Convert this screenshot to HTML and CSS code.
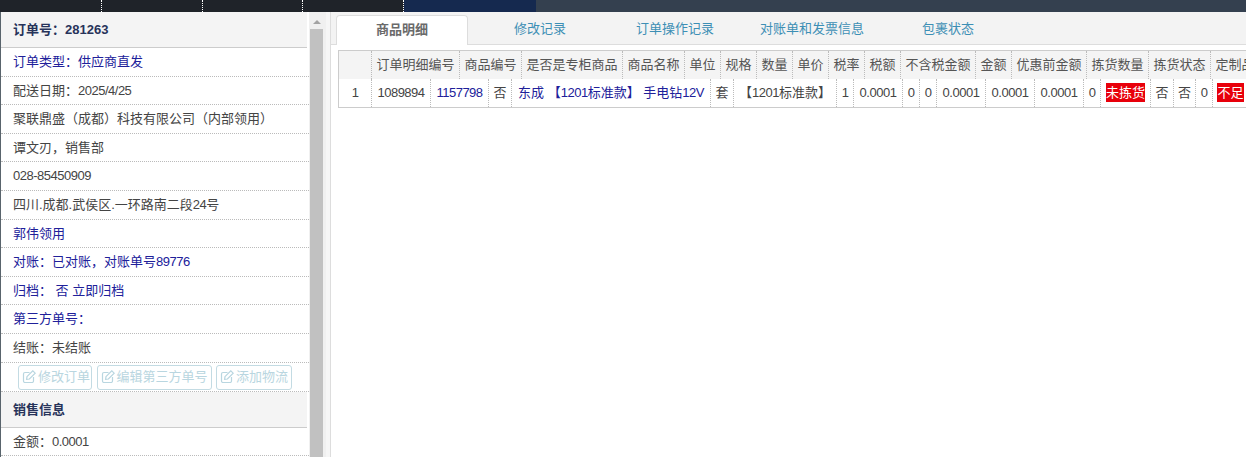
FILE: index.html
```html
<!DOCTYPE html>
<html lang="zh">
<head>
<meta charset="utf-8">
<title>订单详情</title>
<link rel="stylesheet" href="styles.css">
</head>
<body>
<div class="topbar">
  <div class="tb dark"></div><div class="tb dark"></div><div class="tb dark"></div><div class="tb dark"></div>
  <div class="tb navy"></div><div class="tb slate"></div>
</div>
<div class="main">
  <aside class="side">
    <div class="panel">
      <div class="ph">订单号：281263</div>
      <div class="row blue">订单类型：供应商直发</div>
      <div class="row">配送日期：<span class="d">2025/4/25</span></div>
      <div class="row">聚联鼎盛（成都）科技有限公司（内部领用）</div>
      <div class="row">谭文刃，销售部</div>
      <div class="row"><span class="d">028-85450909</span></div>
      <div class="row">四川.成都.武侯区.一环路南二段<span class="d">24</span>号</div>
      <div class="row blue">郭伟领用</div>
      <div class="row blue">对账：已对账，对账单号<span class="d">89776</span></div>
      <div class="row blue">归档： 否 立即归档</div>
      <div class="row blue">第三方单号：</div>
      <div class="row">结账：未结账</div>
      <div class="btns">
        <span class="btn"><svg class="ic" viewBox="0 0 14 14"><path d="M7.5 2.5H3A1.5 1.5 0 0 0 1.5 4v7A1.5 1.5 0 0 0 3 12.5h7a1.5 1.5 0 0 0 1.5-1.5V7" fill="none" stroke="currentColor" stroke-width="1.2"/><path d="M5 6.6 10.8 .8l2.4 2.4L7.4 9 4.6 9.4z" fill="none" stroke="currentColor" stroke-width="1.2"/></svg>修改订单</span>
        <span class="btn wide"><svg class="ic" viewBox="0 0 14 14"><path d="M7.5 2.5H3A1.5 1.5 0 0 0 1.5 4v7A1.5 1.5 0 0 0 3 12.5h7a1.5 1.5 0 0 0 1.5-1.5V7" fill="none" stroke="currentColor" stroke-width="1.2"/><path d="M5 6.6 10.8 .8l2.4 2.4L7.4 9 4.6 9.4z" fill="none" stroke="currentColor" stroke-width="1.2"/></svg>编辑第三方单号</span>
        <span class="btn wide"><svg class="ic" viewBox="0 0 14 14"><path d="M7.5 2.5H3A1.5 1.5 0 0 0 1.5 4v7A1.5 1.5 0 0 0 3 12.5h7a1.5 1.5 0 0 0 1.5-1.5V7" fill="none" stroke="currentColor" stroke-width="1.2"/><path d="M5 6.6 10.8 .8l2.4 2.4L7.4 9 4.6 9.4z" fill="none" stroke="currentColor" stroke-width="1.2"/></svg>添加物流</span>
      </div>
      <div class="ph">销售信息</div>
      <div class="row">金额：<span class="d">0.0001</span></div>
    </div>
    <div class="sb"><div class="arrow"></div><div class="thumb"></div></div>
  </aside>
  <section class="content">
    <nav class="tabs">
      <span class="tab on">商品明细</span>
      <span class="tab t2">修改记录</span>
      <span class="tab t3">订单操作记录</span>
      <span class="tab t4">对账单和发票信息</span>
      <span class="tab t5">包裹状态</span>
    </nav>
    <div class="grid">
      <div class="gh">
        <span class="c w33"></span><span class="c w88">订单明细编号</span><span class="c w62">商品编号</span><span class="c w101">是否是专柜商品</span><span class="c w62">商品名称</span><span class="c w36">单位</span><span class="c w36">规格</span><span class="c w36">数量</span><span class="c w36">单价</span><span class="c w36">税率</span><span class="c w36">税额</span><span class="c w75">不含税金额</span><span class="c w36">金额</span><span class="c w75">优惠前金额</span><span class="c w62">拣货数量</span><span class="c w62">拣货状态</span><span class="c w49">定制品</span>
      </div>
      <div class="gb">
        <span class="c w33 d">1</span><span class="c w59 d">1089894</span><span class="c w58 d blue">1157798</span><span class="c w23">否</span><span class="c w199 blue">东成 【<span class="d">1201</span>标准款】 手电钻<span class="d">12V</span></span><span class="c w23">套</span><span class="c w103">【<span class="d">1201</span>标准款】</span><span class="c w17 d">1</span><span class="c w49 d">0.0001</span><span class="c w17 d">0</span><span class="c w17 d">0</span><span class="c w49 d">0.0001</span><span class="c w49 d">0.0001</span><span class="c w49 d">0.0001</span><span class="c w17 d">0</span><span class="c w50"><em class="red">未拣货</em></span><span class="c w23">否</span><span class="c w22">否</span><span class="c w17 d">0</span><span class="c w36"><em class="red">不足</em></span>
      </div>
    </div>
  </section>
</div>
</body>
</html>
```
FILE: styles.css
```css
* { box-sizing: border-box; }
html, body { margin: 0; padding: 0; height: 457px; overflow: hidden; background: #fff; }
body { font: 13px/1.2 "Liberation Sans", "Noto Sans CJK SC", sans-serif; color: #333; }
.d { letter-spacing: -.5px; }
.topbar { display: flex; height: 12px; background: #34404f; }
.tb { height: 12px; }
.dark { width: 101px; background: #1f2329; border-right: 1px dotted #fff; }
.dark:first-child { width: 102px; }
.dark:nth-child(3) { width: 100px; }
.navy { width: 132px; background: #15294f; }
.slate { flex: 1; background: #34404f; }
.main { display: flex; height: 445px; }
.side { display: flex; width: 331px; flex: none; border-left: 1px solid #59646c; border-right: 1px solid #ddd; background: #f6f6f6; }
.panel { width: 308px; background: #fff; overflow: hidden; }
.ph { height: 36px; margin-right: 2px; padding-left: 12px; line-height: 36px; font-weight: bold; color: #27335a; background: #f4f4f4; border-bottom: 1px solid #ccc; }
.row { height: 28.6px; padding-left: 12px; line-height: 27.5px; border-bottom: 1px dotted #bbb; color: #444; white-space: nowrap; }
.blue { color: #20209a; }
.btns { display: flex; gap: 4.5px; height: 29px; padding: 2px 0 0 17px; border-bottom: 1px dotted #bbb; }
.btn { display: flex; align-items: center; height: 25px; padding: 0 1px 0 3px; border: 1px solid #c3dbe3; border-radius: 3px; color: #b9d6e0; white-space: nowrap; }
.wide { padding: 0 3px; }
.ic { width: 14px; height: 14px; margin-right: 2px; flex: none; }
.sb { position: relative; width: 17px; padding-top: 17px; background: #f0f0f0; }
.arrow { position: absolute; top: 8px; left: 4px; width: 0; border: 4px solid transparent; border-top: 0; border-bottom-color: #a3a3a3; }
.thumb { width: 13px; height: 430px; margin-left: 1px; background: #c1c1c1; }
.content { flex: 1; min-width: 0; overflow: hidden; }
.tabs { display: flex; height: 33px; padding-left: 5px; background: #f3f3f3; border-bottom: 1px solid #ddd; }
.tab { height: 32px; line-height: 34px; text-align: center; color: #3d8fb5; white-space: nowrap; }
.on { flex: none; width: 132px; height: 30px; margin-top: 3px; line-height: 27px; background: #fff; color: #6a6a6a; font-weight: bold; border: 1px solid #ddd; border-bottom: 0; border-radius: 4px 4px 0 0; }
.t2 { width: 144px; }
.t3 { width: 126px; }
.t4 { width: 148px; }
.t5 { width: 124px; }
.grid { width: 950px; margin: 5px 0 0 7px; border: solid #ccc; border-width: 1px 0 1px 1px; }
.gh, .gb { display: flex; white-space: nowrap; }
.gh { height: 28px; line-height: 27px; background: #f4f4f4; color: #555; }
.gb { height: 28px; line-height: 27px; color: #444; }
.c { flex: none; overflow: hidden; text-align: center; border-right: 1px dotted #bbb; }
.gb .blue { color: #20209a; }
.w17 { width: 17px; } .w22 { width: 22px; } .w23 { width: 23px; } .w33 { width: 33px; } .w36 { width: 36px; }
.w49 { width: 49px; } .w50 { width: 50px; } .w58 { width: 58px; } .w59 { width: 59px; }
.w62 { width: 62px; } .w75 { width: 75px; } .w88 { width: 88px; } .w101 { width: 101px; } .w103 { width: 103px; } .w199 { width: 199px; }
.red { display: inline-block; height: 19px; line-height: 19px; font-style: normal; background: #e8000b; color: #fff; }
```
